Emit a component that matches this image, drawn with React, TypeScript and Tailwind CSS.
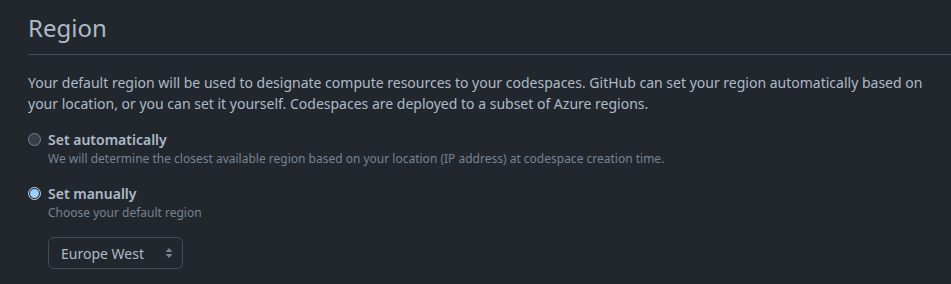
import { useState } from "react";

const regions = ["US East", "US West", "Europe West", "Southeast Asia"];

function Radio({ checked }: { checked: boolean }) {
  return checked ? (
    <span className="flex items-center justify-center w-[13px] h-[13px] rounded-full border border-[#cdd9e5] bg-[#22272e] shrink-0">
      <span className="w-[9px] h-[9px] rounded-full bg-[#96d0ff]" />
    </span>
  ) : (
    <span className="w-[13px] h-[13px] rounded-full border border-[#768390] bg-[#373e47] shrink-0" />
  );
}

export default function App() {
  const [mode, setMode] = useState<"auto" | "manual">("manual");
  const [region, setRegion] = useState("Europe West");

  return (
    <div
      className="min-h-[284px] bg-[#22272e] text-[#adbac7] pl-[28px] overflow-hidden"
      style={{ fontFamily: '"Noto Sans", "Open Sans", sans-serif' }}
    >
      <div className="w-[1000px]">
        <h2 className="pt-[10px] pb-2 text-[24px] leading-[36px] font-normal border-b border-[#444c56]">
          Region
        </h2>
      </div>
      <p className="mt-[17px] text-[14px] leading-[21px] pr-[2px]">
        Your default region will be used to designate compute resources to your codespaces. GitHub can set your region automatically based on your location, or you can set it yourself. Codespaces are deployed to a subset of Azure regions.
      </p>

      <div className="mt-[15px] flex flex-col">
        <label className="flex flex-col cursor-pointer" onClick={() => setMode("auto")}>
          <span className="flex items-center gap-[7px]">
            <Radio checked={mode === "auto"} />
            <span className="text-[14px] leading-[21px] font-semibold">Set automatically</span>
          </span>
          <span className="pl-[20px] text-[12px] leading-[18px] text-[#768390]">
            We will determine the closest available region based on your location (IP address) at codespace creation time.
          </span>
        </label>

        <label className="mt-[15px] flex flex-col cursor-pointer" onClick={() => setMode("manual")}>
          <span className="flex items-center gap-[7px]">
            <Radio checked={mode === "manual"} />
            <span className="text-[14px] leading-[21px] font-semibold">Set manually</span>
          </span>
          <span className="pl-[20px] text-[12px] leading-[18px] text-[#768390]">
            Choose your default region
          </span>
        </label>

        <div className="pl-[20px] mt-[15px]">
          <div className="relative w-[135px] h-[32px] rounded-[6px] border border-[#444c56] bg-[#22272e] flex items-center">
            <select
              value={region}
              onChange={(e) => setRegion(e.target.value)}
              className="appearance-none bg-transparent w-full h-full pl-[12px] pr-[28px] text-[14px] text-[#adbac7] outline-none cursor-pointer"
            >
              {regions.map((r) => (
                <option key={r} value={r}>
                  {r}
                </option>
              ))}
            </select>
            <svg
              className="absolute right-[9px] top-[8px] pointer-events-none"
              width="8"
              height="14"
              viewBox="0 0 8 14"
            >
              <path d="M4 2 L7.5 6 L0.5 6 Z" fill="#768390" />
              <path d="M4 12 L7.5 8 L0.5 8 Z" fill="#768390" />
            </svg>
          </div>
        </div>
      </div>
    </div>
  );
}
